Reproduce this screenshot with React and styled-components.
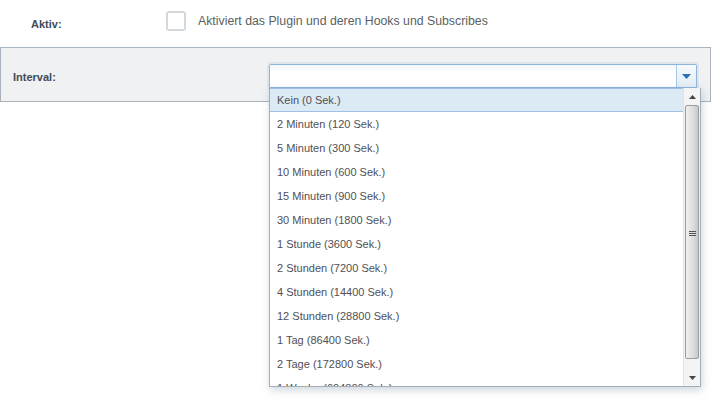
import React, { useState } from "react";
import styled, { createGlobalStyle } from "styled-components";

const intervals = [
  "Kein (0 Sek.)",
  "2 Minuten (120 Sek.)",
  "5 Minuten (300 Sek.)",
  "10 Minuten (600 Sek.)",
  "15 Minuten (900 Sek.)",
  "30 Minuten (1800 Sek.)",
  "1 Stunde (3600 Sek.)",
  "2 Stunden (7200 Sek.)",
  "4 Stunden (14400 Sek.)",
  "12 Stunden (28800 Sek.)",
  "1 Tag (86400 Sek.)",
  "2 Tage (172800 Sek.)",
  "1 Woche (604800 Sek.)",
];

const App = () => {
  const [active, setActive] = useState(false);
  const [selected] = useState(0);

  return (
    <>
      <GlobalStyle />
      <StPage>
        <StRow>
          <StLabel $indent={31}>Aktiv:</StLabel>
          <StCheckbox $checked={active} onClick={() => setActive(!active)} />
          <StHelp>Aktiviert das Plugin und deren Hooks und Subscribes</StHelp>
        </StRow>
        <StPanel>
          <StLabel $indent={12}>Interval:</StLabel>
          <StCombo>
            <StInput />
            <StTrigger>
              <svg width="9" height="5" viewBox="0 0 9 5">
                <path d="M0 0h9L4.5 5z" fill="#2a6fb4" />
              </svg>
            </StTrigger>
            <StList>
              <StItems>
                {intervals.map((label, i) => (
                  <StItem key={label} $selected={i === selected}>
                    {label}
                  </StItem>
                ))}
              </StItems>
              <StScrollbar>
                <StScrollBtn>
                  <svg width="7" height="4" viewBox="0 0 7 4">
                    <path d="M0 4h7L3.5 0z" fill="#444" />
                  </svg>
                </StScrollBtn>
                <StThumb>
                  <svg width="7" height="6" viewBox="0 0 7 6">
                    <path d="M0 .5h7M0 2.5h7M0 4.5h7" stroke="#555" strokeWidth="1" />
                  </svg>
                </StThumb>
                <StScrollBtn $down>
                  <svg width="7" height="4" viewBox="0 0 7 4">
                    <path d="M0 0h7L3.5 4z" fill="#444" />
                  </svg>
                </StScrollBtn>
              </StScrollbar>
            </StList>
          </StCombo>
        </StPanel>
      </StPage>
    </>
  );
};

export default App;

const GlobalStyle = createGlobalStyle`
  body {
    margin: 0;
    background: #fff;
    font-family: "Liberation Sans", Arial, sans-serif;
  }
`;

const StPage = styled.div`
  width: 712px;
  height: 399px;
  overflow: hidden;
`;

const StRow = styled.div`
  height: 47px;
  display: flex;
  align-items: center;
  box-sizing: border-box;
`;

const StLabel = styled.div`
  width: ${(p) => 166 - p.$indent}px;
  padding-left: ${(p) => p.$indent}px;
  font-size: 11px;
  font-weight: 700;
  color: #3f4b57;
`;

const StCheckbox = styled.div`
  width: 16px;
  height: 16px;
  border: 2px solid #d3d8dc;
  border-radius: 3px;
  background: #fff;
  margin-top: -6px;
  cursor: pointer;
`;

const StHelp = styled.div`
  margin-left: 12px;
  margin-top: -6px;
  font-size: 12.3px;
  color: #5b5f63;
`;

const StPanel = styled.div`
  width: 711px;
  height: 55px;
  box-sizing: border-box;
  border: 1px solid #aab4be;
  background: #eff1f3;
  display: flex;
  align-items: center;
  & > ${StLabel} {
    width: 256px;
    margin-top: 5px;
  }
`;

const StCombo = styled.div`
  position: relative;
  width: 428px;
  height: 24px;
  margin-top: 3px;
  display: flex;
  border: 1px solid #8db5de;
  box-sizing: border-box;
  border-radius: 2px 2px 0 0;
  box-shadow: 0 0 0 2px #dde4ea;
  background: #fff;
`;

const StInput = styled.div`
  flex: 1;
  background: linear-gradient(#f4f6f8, #fff 40%);
`;

const StTrigger = styled.div`
  width: 19px;
  border-left: 1px solid #a9c6e3;
  background: linear-gradient(#f6f9fc, #e3edf6);
  display: flex;
  align-items: center;
  justify-content: center;
  padding-top: 1px;
`;

const StList = styled.div`
  position: absolute;
  left: -1px;
  top: 23px;
  width: 432px;
  height: 299px;
  box-sizing: border-box;
  border: 1px solid #a3adb6;
  border-top: none;
  background: #fff;
  display: flex;
  box-shadow: 1px 3px 8px rgba(60, 90, 120, 0.25);
  overflow: hidden;
`;

const StItems = styled.div`
  flex: 1;
  display: flex;
  flex-direction: column;
`;

const StItem = styled.div`
  flex: none;
  height: 24px;
  box-sizing: border-box;
  padding-left: 7px;
  display: flex;
  align-items: center;
  font-size: 11px;
  color: #4f4f55;
  background: ${(p) => (p.$selected ? "#dceaf5" : "#fff")};
  border-bottom: 1px solid ${(p) => (p.$selected ? "#9fc2e4" : "transparent")};
  border-top: 1px solid ${(p) => (p.$selected ? "#9fc2e4" : "transparent")};
`;

const StScrollbar = styled.div`
  width: 16px;
  display: flex;
  flex-direction: column;
  background: #f2f2f2;
  border-left: 1px solid #e3e3e3;
`;

const StScrollBtn = styled.div`
  height: ${(p) => (p.$down ? 27 : 17)}px;
  display: flex;
  justify-content: center;
  align-items: ${(p) => (p.$down ? "flex-end" : "center")};
  padding-bottom: ${(p) => (p.$down ? 6 : 0)}px;
  box-sizing: border-box;
  background: #f4f4f4;
`;

const StThumb = styled.div`
  flex: 1;
  margin: 0 1px;
  border: 1px solid #9c9c9c;
  border-radius: 2px;
  background: linear-gradient(90deg, #f0f0f0, #dcdcdc 60%, #c8c8c8);
  display: flex;
  align-items: center;
  justify-content: center;
  padding-top: 3px;
`;
